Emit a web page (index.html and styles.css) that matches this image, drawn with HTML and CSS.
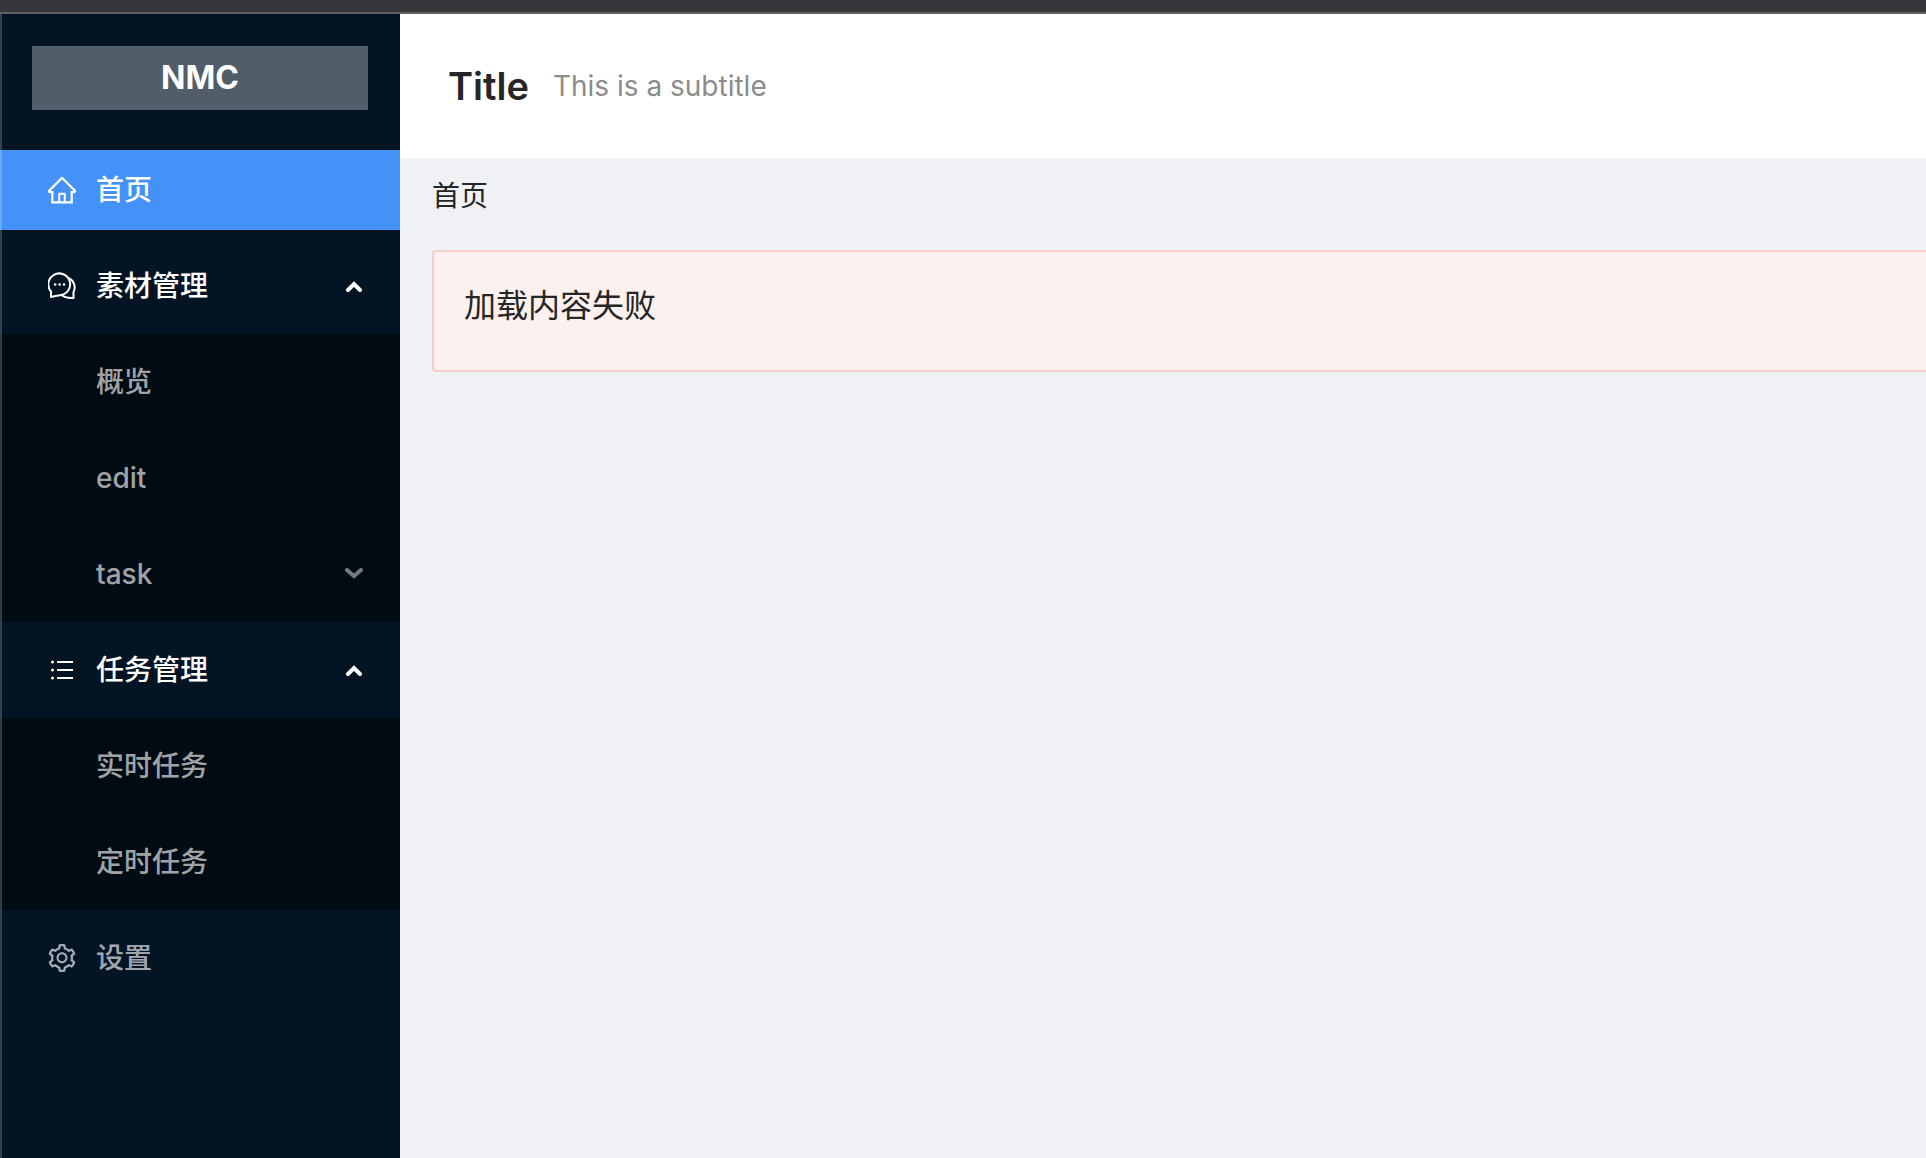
FILE: index.html
```html
<!DOCTYPE html>
<html lang="zh-CN">
<head>
<meta charset="utf-8">
<title>NMC</title>
<link rel="stylesheet" href="styles.css">
</head>
<body>
<div class="topbar"></div>
<div class="layout">
  <aside class="sider">
    <div class="logo">NMC</div>
    <nav class="menu">
      <a class="item item-selected" href="#home">
        <svg class="icon" viewBox="64 64 896 896" aria-hidden="true"><path d="M946.500 505L560.100 118.800l-25.900-25.900a31.500 31.500 0 0 0-44.400 0L77.500 505a63.900 63.900 0 0 0-18.800 46c.4 35.200 29.700 63.300 64.900 63.300h42.500V940h691.800V614.300h43.400c17.100 0 33.200-6.700 45.300-18.800a63.600 63.600 0 0 0 18.700-45.300c0-17-6.700-33.100-18.800-45.200zM568 868H456V664h112v204zm217.900-325.700V868H632V640c0-22.100-17.900-40-40-40H432c-22.100 0-40 17.900-40 40v228H238.100V542.300h-96l370-369.700 23.100 23.100L882 542.300h-96.100z"/></svg>
        <span>首页</span>
      </a>
      <button class="item item-open" type="button" aria-expanded="true">
        <svg class="icon icon-line" viewBox="0 0 28 28" aria-hidden="true">
          <path d="M3 25v-5.500A10.900 10.900 0 1 1 12 23.200C9.500 23.500 6.500 24 3 25z"/>
          <path d="M21 6.200A10.200 10.200 0 0 1 25.500 20v6c-4.200-.2-8.700.2-12-3"/>
          <g class="dots"><circle cx="7.200" cy="12.500" r="1.300"/><circle cx="11.600" cy="12.500" r="1.300"/><circle cx="16" cy="12.500" r="1.300"/></g>
        </svg>
        <span>素材管理</span>
        <svg class="arrow" viewBox="0 0 20 12" aria-hidden="true"><path d="M4 10l6-6 6 6"/></svg>
      </button>
      <div class="submenu">
        <a class="item" href="#overview">概览</a>
        <a class="item" href="#edit">edit</a>
        <button class="item" type="button" aria-expanded="false">
          <span>task</span>
          <svg class="arrow arrow-muted" viewBox="0 0 20 12" aria-hidden="true"><path d="M3 2l7 6 7-6"/></svg>
        </button>
      </div>
      <button class="item item-open" type="button" aria-expanded="true">
        <svg class="icon icon-line" viewBox="0 0 28 28" aria-hidden="true">
          <path d="M9 6h16M9 14h16M9 22h16"/>
          <g class="dots"><circle cx="4.500" cy="6" r="1.500"/><circle cx="4.500" cy="14" r="1.500"/><circle cx="4.500" cy="22" r="1.500"/></g>
        </svg>
        <span>任务管理</span>
        <svg class="arrow" viewBox="0 0 20 12" aria-hidden="true"><path d="M4 10l6-6 6 6"/></svg>
      </button>
      <div class="submenu">
        <a class="item" href="#realtime">实时任务</a>
        <a class="item" href="#scheduled">定时任务</a>
      </div>
      <a class="item" href="#settings">
        <svg class="icon" viewBox="64 64 896 896" aria-hidden="true"><path d="M924.800 625.700l-65.500-56c3.100-19 4.700-38.400 4.700-57.800s-1.600-38.800-4.700-57.800l65.500-56a32.030 32.030 0 0 0 9.300-35.200l-.9-2.600a443.740 443.740 0 0 0-79.700-137.900l-1.800-2.100a32.120 32.120 0 0 0-35.100-9.500l-81.300 28.900c-30-24.600-63.500-44-99.700-57.600l-15.700-85a32.050 32.050 0 0 0-25.800-25.700l-2.700-.5c-52.100-9.400-106.900-9.400-159 0l-2.700.5a32.050 32.050 0 0 0-25.800 25.700l-15.800 85.400a351.860 351.860 0 0 0-99 57.400l-81.900-29.100a32 32 0 0 0-35.100 9.500l-1.800 2.100a446.020 446.020 0 0 0-79.700 137.900l-.9 2.600c-4.500 12.500-.8 26.500 9.300 35.200l66.300 56.600c-3.100 18.800-4.600 38-4.600 57.100 0 19.200 1.500 38.400 4.600 57.100L99 625.500a32.030 32.030 0 0 0-9.300 35.200l.9 2.600c18.100 50.400 44.900 96.900 79.700 137.900l1.800 2.100a32.120 32.120 0 0 0 35.100 9.500l81.900-29.100c29.800 24.500 63.100 43.900 99 57.400l15.800 85.400a32.050 32.050 0 0 0 25.800 25.700l2.700.5a449.400 449.400 0 0 0 159 0l2.700-.5a32.050 32.050 0 0 0 25.800-25.700l15.700-85a350 350 0 0 0 99.700-57.600l81.300 28.900a32 32 0 0 0 35.100-9.500l1.800-2.100c34.800-41.100 61.600-87.500 79.700-137.900l.9-2.600c4.500-12.300.8-26.300-9.300-35zM788.300 465.900c2.500 15.100 3.800 30.600 3.800 46.100s-1.300 31-3.800 46.100l-6.600 40.100 74.700 63.900a370.030 370.030 0 0 1-42.600 73.600L721 702.800l-31.400 25.800c-23.900 19.600-50.500 35-79.300 45.800l-38.100 14.300-17.900 97a377.500 377.500 0 0 1-85 0l-17.900-97.200-37.800-14.500c-28.500-10.800-55-26.200-78.700-45.700l-31.400-25.900-93.400 33.200c-17-22.900-31.200-47.600-42.600-73.600l75.500-64.500-6.500-40c-2.400-14.900-3.700-30.300-3.700-45.500 0-15.300 1.200-30.600 3.700-45.500l6.500-40-75.500-64.500c11.300-26.100 25.600-50.700 42.600-73.600l93.400 33.200 31.400-25.900c23.700-19.500 50.200-34.900 78.700-45.700l37.900-14.300 17.900-97.200c28.100-3.200 56.800-3.200 85 0l17.900 97 38.100 14.300c28.700 10.800 55.400 26.200 79.300 45.800l31.400 25.800 92.800-32.900c17 22.900 31.200 47.600 42.600 73.600L781.800 426l6.500 39.900z"/><path d="M512 326c-97.200 0-176 78.800-176 176s78.800 176 176 176 176-78.800 176-176-78.800-176-176-176zm79.200 255.200A111.600 111.600 0 0 1 512 614c-29.900 0-58-11.700-79.200-32.800A111.600 111.600 0 0 1 400 502c0-29.900 11.700-58 32.800-79.200C454 401.600 482.100 390 512 390c29.900 0 58 11.600 79.200 32.800A111.600 111.600 0 0 1 624 502c0 29.900-11.700 58-32.800 79.200z"/></svg>
        <span>设置</span>
      </a>
    </nav>
  </aside>
  <div class="main">
    <header class="header">
      <h1 class="title">Title</h1>
      <span class="subtitle">This is a subtitle</span>
    </header>
    <main class="content">
      <nav class="breadcrumb">首页</nav>
      <div class="alert" role="alert">加载内容失败</div>
    </main>
  </div>
</div>
</body>
</html>
```
FILE: styles.css
```css
* {
  box-sizing: border-box;
}

body {
  display: flex;
  flex-direction: column;
  min-height: 100vh;
  margin: 0;
  background: #f0f1f5;
  color: #262626;
  font-family: Inter, "Noto Sans CJK SC", sans-serif;
  font-size: 28px;
  line-height: 44px;
}

.topbar {
  height: 14px;
  background: #36373a;
  border-bottom: 2px solid #5e6062;
}

.layout {
  display: flex;
  flex: 1;
}

.sider {
  position: relative;
  flex: 0 0 400px;
  background: #031425;
}

/* light window edge over the menu */
.sider::after {
  content: "";
  position: absolute;
  inset: 0 auto 0 0;
  width: 2px;
  background: rgba(255, 255, 255, 0.2);
}

.logo {
  margin: 32px 32px 40px;
  background: #515d68;
  color: #fff;
  font-size: 32px;
  font-weight: 700;
  line-height: 64px;
  text-align: center;
}

.item {
  display: flex;
  align-items: center;
  gap: 20px;
  width: 100%;
  height: 96px;
  padding: 0 36px 0 48px;
  border: 0;
  background: none;
  color: rgba(255, 255, 255, 0.65);
  font: inherit;
  font-weight: 500;
  text-align: left;
  text-decoration: none;
}

.item-selected {
  height: 80px;
  margin-bottom: 8px;
  background: #4491f7;
  color: #fff;
}

.item-open {
  color: #fff;
}

.submenu {
  background: #010b14;
}

.submenu .item {
  padding-left: 96px;
}

.icon {
  width: 28px;
  height: 28px;
  fill: currentColor;
}

.icon-line {
  fill: none;
  stroke: currentColor;
  stroke-width: 2;
  stroke-linejoin: round;
}

.dots {
  fill: currentColor;
  stroke: none;
}

.arrow {
  width: 20px;
  height: 12px;
  margin-left: auto;
  fill: none;
  stroke: currentColor;
  stroke-width: 4;
  stroke-linecap: round;
}

.arrow-muted {
  opacity: 0.7;
}

.main {
  flex: 1;
  min-width: 0;
}

.header {
  display: flex;
  align-items: center;
  gap: 24px;
  height: 144px;
  padding: 0 48px;
  background: #fff;
}

.title {
  margin: 0;
  font-size: 38px;
  font-weight: 600;
}

.subtitle {
  color: #8c8c8c;
}

.content {
  padding-left: 32px;
}

.breadcrumb {
  padding: 16px 0 32px;
}

.alert {
  min-height: 122px;
  padding: 32px 30px;
  border: 2px solid #f6cdc8;
  border-right: 0;
  border-radius: 4px 0 0 4px;
  background: #fdf1ef;
  font-size: 32px;
}
```
